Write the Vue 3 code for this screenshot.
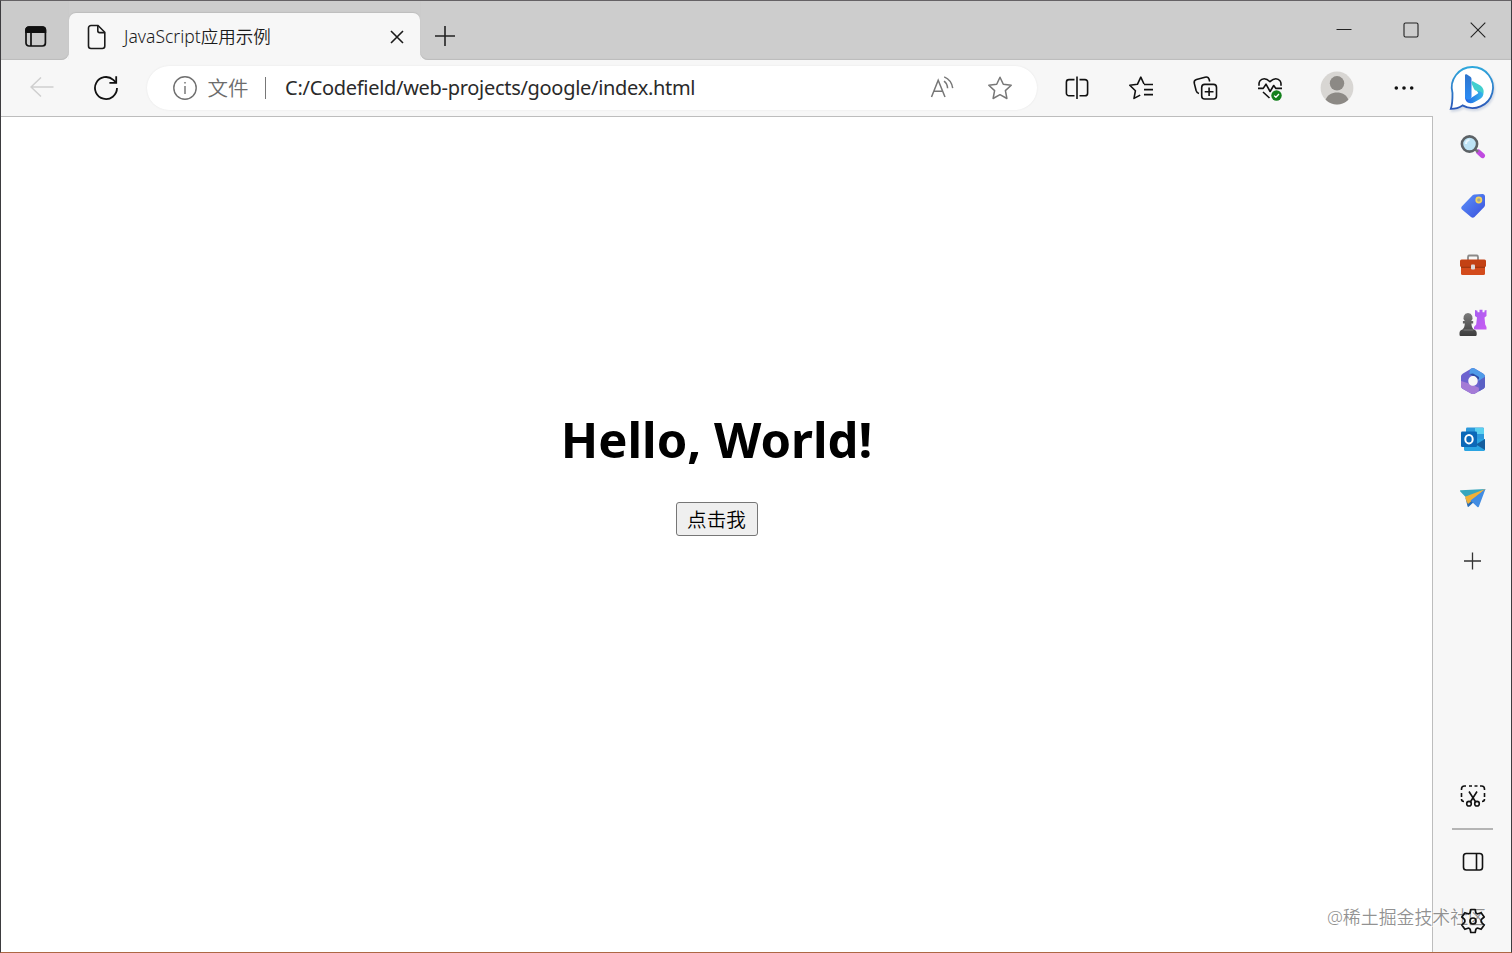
<template>
    <div class="window">
        <header class="titlebar">
            <div class="tab-menu">
                <svg width="22" height="22" viewBox="0 0 22 22" fill="none" stroke="#111" stroke-width="1.7">
                    <rect x="1" y="1" width="19.4" height="19" rx="3" />
                    <path d="M1 4a3 3 0 0 1 3-3h13.400a3 3 0 0 1 3 3v2.200H1z" fill="#111" />
                    <path d="M6 6v14" />
                </svg>
            </div>
            <div class="tab">
                <svg class="file-icon" width="20" height="26" viewBox="0 0 20 26" fill="none" stroke="#1b1b1b" stroke-width="1.6">
                    <path d="M4 1.500h7l6.800 6.800v13.700a2.500 2.500 0 0 1-2.500 2.500H4A2.500 2.500 0 0 1 1.500 22V4A2.500 2.500 0 0 1 4 1.500z" />
                    <path d="M10.800 1.800v5a1.800 1.800 0 0 0 1.800 1.800h5" />
                </svg>
                <span class="tab-title">JavaScript应用示例</span>
                <svg class="tab-close" width="14" height="14" viewBox="0 0 14 14" stroke="#1b1b1b" stroke-width="1.6">
                    <path d="M1 1l12 12M13 1L1 13" />
                </svg>
            </div>
            <div class="tab-rest">
                <svg class="new-tab" width="22" height="22" viewBox="0 0 22 22" stroke="#222" stroke-width="1.6">
                    <path d="M11 1v20M1 11h20" />
                </svg>
                <div class="window-controls">
                    <svg width="16" height="16" viewBox="0 0 16 16"><path d="M.5 7.500h15" stroke="#222" /></svg>
                    <svg width="16" height="16" viewBox="0 0 16 16" fill="none" stroke="#222" stroke-width="1.100">
                        <rect x="1" y="1" width="14" height="14" rx="1.500" />
                    </svg>
                    <svg width="16" height="16" viewBox="0 0 16 16" stroke="#222" stroke-width="1.100">
                        <path d="M.7.7l14.600 14.600M15.300.7L.7 15.300" />
                    </svg>
                </div>
            </div>
        </header>

        <nav class="toolbar">
            <div class="tool">
                <svg width="24" height="22" viewBox="0 0 24 22" fill="none" stroke="#cfcfcf" stroke-width="1.500">
                    <path d="M11 .5L1 10l10 9.500M1 10H23.500" />
                </svg>
            </div>
            <div class="tool">
                <svg width="26" height="26" viewBox="0 0 26 26" fill="none" stroke="#111" stroke-width="1.800">
                    <path d="M24 13A11 11 0 1 1 20.300 4.800L23.200 7.600" />
                    <path d="M23.200 1.200v6.600h-6.800" />
                </svg>
            </div>
            <div class="address">
                <svg width="26" height="26" viewBox="0 0 26 26" fill="none" stroke="#707070" stroke-width="1.400">
                    <circle cx="13" cy="13" r="11.200" />
                    <path d="M13 11v8" />
                    <circle cx="13" cy="7.800" r=".5" fill="#707070" stroke-width=".8" />
                </svg>
                <span class="scheme">文件</span>
                <span class="bar"></span>
                <span class="url">C:/Codefield/web-projects/google/index.html</span>
                <svg class="read" width="24" height="24" viewBox="0 0 24 24" fill="none" stroke="#777" stroke-width="1.500">
                    <path d="M1.500 21L8.200 4.200 15 21M4 15.200h8.600" />
                    <path d="M14 5.200c2.200 1.500 3.300 3.700 3.600 7M14.200 .9c4.800 2 7.700 5.800 8.500 11.300" />
                </svg>
                <svg width="26" height="26" viewBox="0 0 26 26" fill="none" stroke="#777" stroke-width="1.500" stroke-linejoin="round">
                    <path d="M13 2.200l3.300 7.100 7.900 1-5.800 5.300 1.500 7.900L13 19.700l-6.900 3.800 1.500-7.900L1.800 10.300l7.900-1z" />
                </svg>
            </div>
            <div class="tool first">
                <svg width="24" height="24" viewBox="0 0 24 24" fill="none" stroke="#111" stroke-width="1.600">
                    <path d="M9.500 3.600H4a2.600 2.600 0 0 0-2.600 2.600v11A2.600 2.600 0 0 0 4 19.800h5.500M14.500 3.600H20a2.600 2.600 0 0 1 2.600 2.600v11a2.600 2.600 0 0 1-2.600 2.600h-5.500M12 .5v22.500" />
                </svg>
            </div>
            <div class="tool">
                <svg width="26" height="26" viewBox="0 0 26 26" fill="none" stroke="#111" stroke-width="1.600" stroke-linejoin="round">
                    <path d="M16 9l-3.200-6.800L9.400 9.300l-7.600 1 5.600 5.500-1.400 7.600 6.200-3.300" />
                    <path d="M16 9.500h9M16 14.600h9M16 19.600h9" />
                </svg>
            </div>
            <div class="tool">
                <svg width="26" height="26" viewBox="0 0 26 26" fill="none" stroke="#111" stroke-width="1.600">
                    <rect x="9.700" y="9.400" width="14.800" height="14.600" rx="3" />
                    <path d="M17.100 12.500v8.600M12.700 16.800h8.800M7 18.500c-1.800-.4-2.500-1.600-2.900-3L2.300 8.400c-.5-2 .3-3.300 2.200-3.900L13 2.200c2.200-.6 3.600.2 4.200 2.300l.5 2" />
                </svg>
            </div>
            <div class="tool">
                <svg width="26" height="26" viewBox="0 0 26 26" fill="none" stroke="#111" stroke-width="1.600" stroke-linejoin="round">
                    <path d="M2.200 10.700c-.9-3.400 1.200-7 5-7 2.600 0 4.300 1.500 5.800 3 1.500-1.500 3.200-3 5.800-3 3.800 0 5.900 3.600 5 7" />
                    <path d="M1 13.400h5.200L9 9.200l4.100 7.300 3.600-6 2.200 2.900H25M6 17l6.500 6" />
                    <circle cx="19.500" cy="20.500" r="5.200" fill="#13801c" stroke="none" />
                    <path d="M17.100 20.600l1.800 1.700 3.100-3.300" stroke="#fff" stroke-width="1.300" />
                </svg>
            </div>
            <div class="tool profile">
                <svg width="34" height="34" viewBox="0 0 34 34" fill="#8c8985">
                    <circle cx="17" cy="17" r="16.400" fill="#d8d6d3" />
                    <circle cx="17" cy="12.300" r="7.200" />
                    <path d="M5.600 28.700c2-5 6.200-7.300 11.400-7.300s9.400 2.300 11.400 7.300A16.400 16.400 0 0 1 17 33.400 16.400 16.400 0 0 1 5.600 28.700z" />
                </svg>
            </div>
            <div class="tool">
                <svg width="20" height="6" viewBox="0 0 20 6" fill="#111">
                    <circle cx="2.300" cy="3" r="1.800" />
                    <circle cx="10" cy="3" r="1.800" />
                    <circle cx="17.700" cy="3" r="1.800" />
                </svg>
            </div>
            <div class="bing">
                <svg width="48" height="48" viewBox="0 0 48 48">
                    <defs>
                        <linearGradient id="bubble" x1="0" y1="0" x2="0" y2="1">
                            <stop offset="0" stop-color="#2fa8dc" />
                            <stop offset="1" stop-color="#2b57b8" />
                        </linearGradient>
                        <linearGradient id="stem" x1="0" y1="0" x2="0" y2="1">
                            <stop offset="0" stop-color="#2f74cc" />
                            <stop offset="1" stop-color="#2a8cf5" />
                        </linearGradient>
                        <linearGradient id="bowl" x1="0" y1="0" x2="1" y2="0">
                            <stop offset="0" stop-color="#1f62e6" />
                            <stop offset="1" stop-color="#35b6ea" />
                        </linearGradient>
                    </defs>
                    <path d="M24.500 3A20.500 20.500 0 1 1 14.500 41.400C11 43.800 7.500 44.800 2.800 44.800 4.300 41 4.600 37.500 4.500 29A20.500 20.500 0 0 1 24.500 3z" fill="#fff" stroke="url(#bubble)" stroke-width="1.800" />
                    <path d="M23.600 18.500c0-1 .8-1.400 1.600-1l6.300 3.500c3.400 1.900 5 5.400 3.800 9.200L33 32l-4.500-5.200c-1.400-.5-2.200-1.100-2.700-2.400l-1.800-4c-.2-.5-.4-1.200-.4-1.900z" fill="#42cfce" />
                    <path d="M17 30c.3 4 3 5.800 6 4l6.500-4.200c1.500-1 1.300-2.300-1-3 4 .3 6.200 2 6.800 3.400-.3 2-1.400 3.600-3.300 4.700l-5.300 3.100C21.500 41 17 38.200 17 33z" fill="url(#bowl)" />
                    <path d="M17 11.500c0-1.200 1-1.700 2-1.100l3 2c.9.600 1.500 1.500 1.500 2.600v17.500c0 1.900-1.500 3-3.200 3S17 34.300 17 32.500z" fill="url(#stem)" />
                </svg>
            </div>
        </nav>

        <div class="body">
            <main class="page">
                <h1>Hello, World!</h1>
                <button type="button">点击我</button>
            </main>

            <aside class="sidebar">
                <div class="slot">
                    <svg width="26" height="26" viewBox="0 0 26 26">
                        <path d="M18.500 18l4 3.700" stroke="#c04be0" stroke-width="5" stroke-linecap="round" />
                        <path d="M15 15l3 3" stroke="#777" stroke-width="2.500" />
                        <circle cx="9.500" cy="10" r="7.600" fill="#bde3f5" stroke="#5c6266" stroke-width="2.600" />
                        <path d="M6 10A4 4 0 0 1 9.500 6" stroke="#eaf8ff" stroke-width="2" fill="none" />
                    </svg>
                </div>
                <div class="slot">
                    <svg width="26" height="26" viewBox="0 0 26 26">
                        <defs>
                            <linearGradient id="tag" x1="0" y1="0" x2="1" y2="1">
                                <stop offset="0" stop-color="#5c93fa" />
                                <stop offset="1" stop-color="#3a50dc" />
                            </linearGradient>
                        </defs>
                        <path d="M14.500 1.500L22.500 1c1.500 0 2.500 1 2.500 2.500v8.500c0 .8-.3 1.500-.8 2L14.500 24c-1 1-2.500 1-3.500 0L2 16.500c-1-1-1-2.300 0-3.300L12.600 2.300c.5-.5 1.200-.8 1.900-.8z" fill="url(#tag)" />
                        <circle cx="18.800" cy="7" r="2.600" fill="#a9a98c" stroke="#f3d45c" stroke-width="1.700" />
                    </svg>
                </div>
                <div class="slot">
                    <svg width="28" height="26" viewBox="0 -1 28 26">
                        <path d="M9 8V5a1.500 1.500 0 0 1 1.500-1.500h7A1.500 1.500 0 0 1 19 5v3" fill="none" stroke="#8b8988" stroke-width="1.800" />
                        <rect x="2" y="12" width="24" height="11" rx="1.500" fill="#d34b1c" />
                        <path d="M2.500 7.500h23A1.500 1.500 0 0 1 27 9v4.500c0 1-.8 1.500-1.500 1.500h-23C1.500 15 1 14.300 1 13.500V9a1.500 1.500 0 0 1 1.500-1.500z" fill="#c34114" />
                        <path d="M2 15.300h24" stroke="#8f300f" stroke-width=".9" />
                        <rect x="12" y="12.500" width="4" height="5" rx="1" fill="#dedada" />
                    </svg>
                </div>
                <div class="slot">
                    <svg width="28" height="28" viewBox="0 -1 28 28">
                        <defs>
                            <linearGradient id="rook" x1="0" y1="0" x2="1" y2="1">
                                <stop offset="0" stop-color="#a45cf0" />
                                <stop offset="1" stop-color="#c95cf2" />
                            </linearGradient>
                            <linearGradient id="pawn" x1="0" y1="0" x2="0" y2="1">
                                <stop offset="0" stop-color="#7c7c7c" />
                                <stop offset="1" stop-color="#3d3d3d" />
                            </linearGradient>
                        </defs>
                        <path d="M16 1l2.500.8v1.500h2V.8h3v2.500h2V1.600L27.500 1v6l-2 1.500.7 7 1.300 2.500v2.500H15V18l2.200-2.500.8-7L16 7z" fill="url(#rook)" />
                        <path d="M9 4a4.700 4.700 0 0 1 3.200 8h2v2.500h-1.800c.1 2.700.8 4.500 2.300 6 1.800.6 3 1.500 3 3.500v1.500c0 1-.7 1.500-1.500 1.500H2C1 27 .5 26.500.5 25.500V24c0-2 1.200-2.900 3-3.500 1.600-1.500 2.200-3.300 2.300-6H3.900V12h1.900A4.700 4.700 0 0 1 9 4z" fill="url(#pawn)" />
                        <path d="M4.500 21h9.700" stroke="#8a8a8a" stroke-width=".8" />
                    </svg>
                </div>
                <div class="slot">
                    <svg width="26" height="28" viewBox="0 0 26 28">
                        <path d="M11 1.700c1.300-.8 2.700-.8 4 0l8 4.700c1.300.8 2 1.800 2 3.300v9c0 1.500-.7 2.500-2 3.300l-8 4.500c-1.300.8-2.700.8-4 0L3 22c-1.300-.8-2-1.800-2-3.300v-9c0-1.500.7-2.500 2-3.300z" fill="#6d62cf" />
                        <path d="M13 1.100c.7 0 1.400.2 2 .6l8 4.700c1.300.8 2 1.800 2 3.300v7.800L18.500 14v-2L9.500 7c0-3 .5-5.900 3.500-5.900z" fill="#4f9be8" />
                        <path d="M9.500 7L19 12.500V10L13 6.500z" fill="#2c4ba5" />
                        <path d="M25 9.700v9c0 1.500-.7 2.500-2 3.300l-4 2.300c1-2 .8-4 .2-6.300l-.7-4z" fill="#5a60c4" />
                        <path d="M1 18v-4l6.500 2 11 4.500c1 1.500.5 3.500-1 4.500L15 26.500c-1.300.8-2.700.8-4 0L3 22c-1.300-.8-2-1.800-2-4z" fill="#a47bd6" />
                        <path d="M13 9.100c2.600 0 4.700 2.100 4.700 4.800s-2.100 4.800-4.700 4.800-4.700-2.100-4.700-4.800 2.100-4.800 4.700-4.800z" fill="#f7f7f7" />
                    </svg>
                </div>
                <div class="slot">
                    <svg width="26" height="26" viewBox="0 0 26 26">
                        <rect x="6" y="1.500" width="18" height="14" rx="1.200" fill="#2c99db" />
                        <path d="M15 2h7.800c.7 0 1.200.5 1.200 1.200V8h-9z" fill="#5bd1ef" />
                        <path d="M4 12l21 1v10.500c0 .8-.5 1.500-1.500 1.500h-18C4.500 25 4 24.300 4 23.500z" fill="#2aa4e2" />
                        <path d="M25 13v11l-9-5.500z" fill="#155e9e" />
                        <rect x="1" y="5.500" width="16" height="15.500" rx="1.300" fill="#0b68b8" />
                        <ellipse cx="9" cy="13.200" rx="3.700" ry="4.200" fill="none" stroke="#fff" stroke-width="2" />
                    </svg>
                </div>
                <div class="slot">
                    <svg width="28" height="24" viewBox="0 0 28 24">
                        <path d="M1.300 5.500c-.6-.6-.3-1.200.5-1.200L26.500 3 7.500 12z" fill="#38a6bd" />
                        <path d="M26.500 3L6.500 12l2 8.200c.2.800.8 1 1.400.4l5-4.600z" fill="#286cb8" />
                        <path d="M26.500 3L6 10.800l1.500 4.400L9 18z" fill="#f2b138" />
                        <path d="M26.500 3L11.500 14.500l6.900 6.400c.6.500 1.200.4 1.500-.4z" fill="#428ce2" />
                    </svg>
                </div>
                <div class="slot add">
                    <svg width="18" height="18" viewBox="0 0 18 18" stroke="#333" stroke-width="1.300">
                        <path d="M8.500 .5v17M0 9h17" />
                    </svg>
                </div>

                <div class="slot bottom">
                    <svg width="26" height="24" viewBox="0 0 26 24" fill="none" stroke="#111" stroke-width="1.600">
                        <path d="M1.500 6V5A3 3 0 0 1 4.500 2H6M9 2h3M14.500 2h3M20 2h1.500a3 3 0 0 1 3 3v1M24.500 9v4M1.500 9v4M1.500 15a2.500 2.500 0 0 0 2.500 2.500M24.500 15a2.500 2.500 0 0 1-2.500 2.500" />
                        <path d="M9 7.500l6.500 10.300M17 7.500l-6.500 10.300" />
                        <circle cx="9" cy="19.700" r="2.300" />
                        <circle cx="17" cy="19.700" r="2.300" />
                    </svg>
                </div>
                <div class="divider"></div>
                <div class="slot">
                    <svg width="22" height="20" viewBox="0 0 22 20" fill="none" stroke="#111" stroke-width="1.600">
                        <rect x="1.500" y="1.500" width="19" height="16.500" rx="2.800" />
                        <path d="M14.500 1.500V18" />
                    </svg>
                </div>
                <div class="slot">
                    <svg class="gear" width="26" height="26" viewBox="0 0 26 26" fill="none" stroke="#111" stroke-width="1.700" stroke-linejoin="round">
                        <path d="M10.800 1.500h4.400l.6 3c.2.900 1.300 1.500 2.200 1.200l3.100-1 3.100 4.300-2.500 2.200c-.8.800-.8 2.600 0 3.400l2.500 2.400-3.100 4.300-3.100-1c-.9-.3-2 .3-2.200 1.200l-.6 3h-4.400l-.6-3c-.2-.9-1.300-1.500-2.200-1.200l-3.100 1L1.800 17l2.500-2.400c.8-.8.8-2.600 0-3.400L1.800 9l3.100-4.300 3.100 1c.9.300 2-.3 2.200-1.200z" />
                        <circle cx="13" cy="13" r="3" />
                    </svg>
                </div>
            </aside>
        </div>

        <div class="watermark">@稀土掘金技术社区</div>
    </div>
</template>

<script setup>
</script>

<style>
body {
    overflow: hidden;
}
</style>

<style scoped>
.window {
    position: relative;
    box-sizing: border-box;
    width: 1512px;
    height: 953px;
    display: flex;
    flex-direction: column;
    border: 1px solid #3d3c3f;
    border-top-color: #656265;
    border-bottom-color: #ad6844;
    background: #f7f7f7;
    font-family: "Noto Sans", "Noto Sans CJK SC", sans-serif;
    color: #1b1b1b;
}
svg {
    display: block;
    flex: none;
}
.titlebar {
    flex: none;
    height: 59px;
    display: flex;
    background: linear-gradient(to bottom, #cdcdcd 50%, #f7f7f7 50%);
}
.tab-menu {
    width: 68px;
    box-sizing: border-box;
    padding: 25px 0 0 24px;
    background: #cbcbcb;
    border-bottom-right-radius: 8px;
    box-shadow: inset 0 -1px 1px #bcbcbc;
}
.tab {
    width: 351px;
    height: 47px;
    box-sizing: border-box;
    margin-top: 12px;
    display: flex;
    align-items: center;
    padding: 0 16px 0 18px;
    border-radius: 7px 7px 0 0;
    background: #f7f7f7;
    box-shadow: 0 -1px 1px #bebebe;
}
.tab-title {
    margin: -2px 0 0 17px;
    font-size: 17.5px;
    font-weight: 350;
    line-height: 24px;
    white-space: nowrap;
}
.tab-close {
    margin-left: auto;
}
.tab-rest {
    flex: 1;
    display: flex;
    justify-content: space-between;
    background: #cdcdcd;
    border-bottom-left-radius: 8px;
    box-shadow: inset 0 -1px 1px #bcbcbc;
}
.new-tab {
    margin: 24px 0 0 14px;
}
.window-controls {
    display: flex;
    gap: 51px;
    padding: 21px 25px 0 0;
}
.toolbar {
    flex: none;
    height: 56px;
    display: flex;
    align-items: center;
    padding-left: 9px;
}
.tool {
    width: 64.3px;
    display: flex;
    justify-content: center;
}
.tool.first {
    margin-left: 8px;
}
.tool.profile {
    width: 70px;
}
.address {
    width: 890px;
    height: 44px;
    box-sizing: border-box;
    margin-left: 8px;
    padding: 0 24px 0 25px;
    display: flex;
    align-items: center;
    border-radius: 22px;
    background: #fff;
    box-shadow: 0 0 2px #e4e4e4;
    white-space: nowrap;
}
.scheme {
    margin: -2px 0 0 10px;
    font-size: 20.5px;
    font-weight: 350;
    color: #6c6c6c;
}
.bar {
    width: 1.5px;
    height: 22px;
    margin: 0 19px 0 16px;
    background: #777;
}
.url {
    margin-top: -1px;
    font-size: 20px;
    letter-spacing: -0.3px;
    color: #2a2a2a;
}
.read {
    margin: 0 33px 0 auto;
}
.bing {
    margin-left: 12px;
    filter: drop-shadow(1px 2px 1px rgba(40, 80, 150, 0.2));
}
.body {
    flex: 1;
    min-height: 0;
    display: flex;
}
.page {
    width: 1432px;
    box-sizing: border-box;
    display: flex;
    flex-direction: column;
    align-items: center;
    padding-top: 290px;
    border-top: 1px solid #bdbdbd;
    border-right: 1px solid #bdbdbd;
    background: #fff;
}
h1 {
    margin: 0;
    font-size: 49px;
    line-height: 65px;
    font-weight: 700;
    color: #000;
    white-space: nowrap;
}
button {
    width: 82px;
    height: 34px;
    margin: 30px 0 0;
    padding: 0;
    border: 1px solid #767676;
    border-radius: 3px;
    background: #efefef;
    font-family: "Noto Sans CJK SC", sans-serif;
    font-size: 19.6px;
    font-weight: 350;
    line-height: 30px;
    color: #000;
}
.sidebar {
    flex: 1;
    display: flex;
    flex-direction: column;
    align-items: center;
    padding: 2px 0 2px 1px;
}
.slot {
    height: 58.4px;
    flex: none;
    display: flex;
    align-items: center;
}
.slot.add {
    margin-top: 5px;
}
.slot.bottom {
    margin-top: auto;
}
.divider {
    width: 41px;
    height: 2px;
    margin: 3px 0;
    background: #b5b5b5;
    flex: none;
}
.watermark {
    position: absolute;
    right: 25px;
    bottom: 22px;
    font-size: 17.9px;
    font-weight: 350;
    line-height: 26px;
    color: rgba(110, 110, 110, 0.75);
    text-shadow: 1px 1px 0 #fff;
    white-space: nowrap;
}
/* keeps the settings icon above the watermark */
.gear {
    position: relative;
    z-index: 1;
}
</style>
